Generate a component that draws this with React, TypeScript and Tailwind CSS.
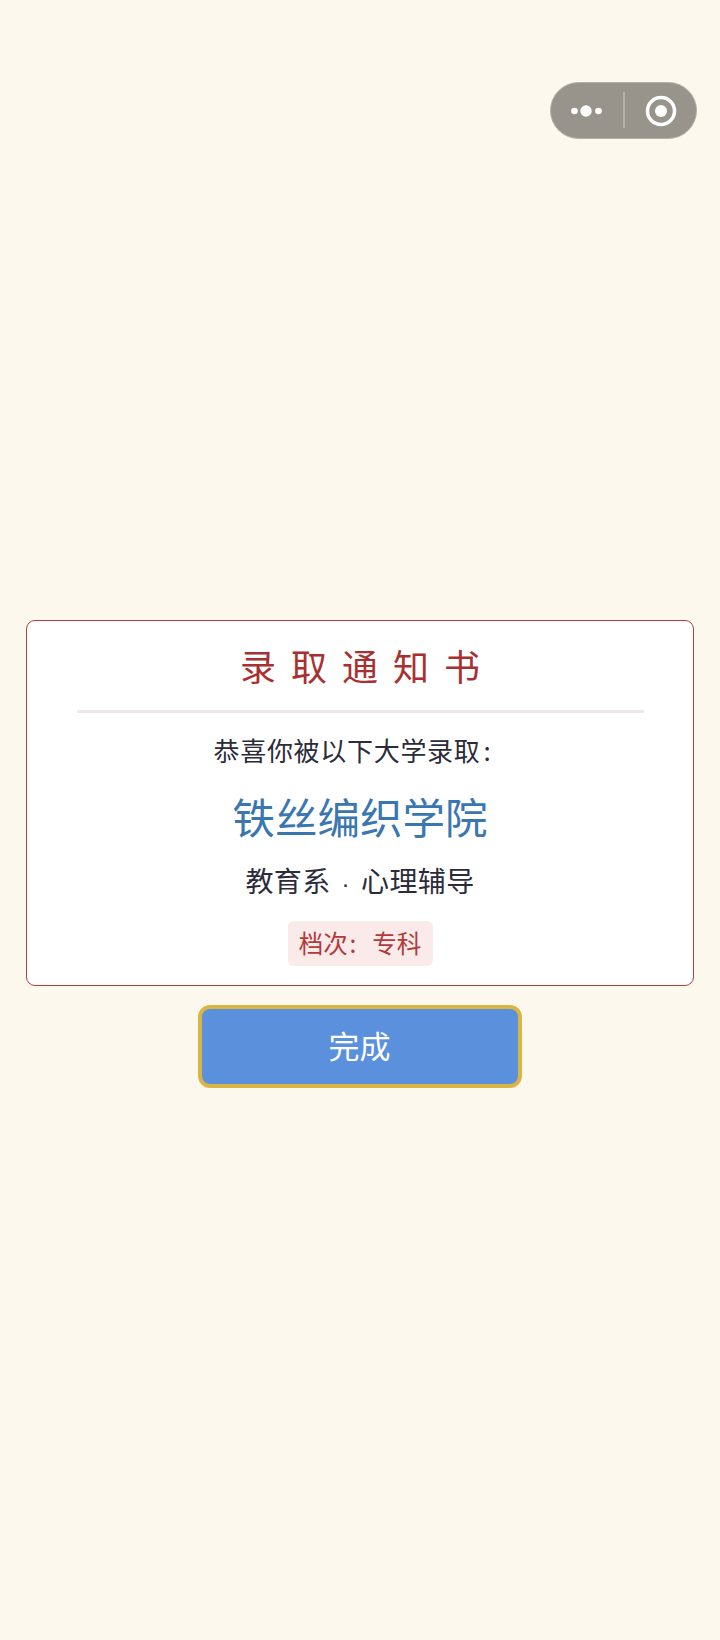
export default function App() {
  return (
    <div className="relative h-[1640px] w-[720px] overflow-hidden bg-[#fcf8ee] font-['Noto_Sans_CJK_SC','Noto_Sans',sans-serif]">
      <div className="absolute left-[550px] top-[82px] flex h-[57px] w-[147px] items-center rounded-full border border-[#b5b1a6] bg-[#98948c]">
        <svg width="147" height="57" viewBox="0 0 147 57" className="absolute -left-px -top-px">
          <circle cx="24.5" cy="29" r="3.3" fill="#fff" />
          <circle cx="36" cy="29" r="5.7" fill="#fff" />
          <circle cx="48.5" cy="29" r="3.3" fill="#fff" />
          <rect x="73" y="10" width="2" height="36" fill="#b5b1a8" />
          <circle cx="111" cy="29" r="13.5" fill="none" stroke="#fff" strokeWidth="3.5" />
          <circle cx="111" cy="29" r="6" fill="#fff" />
        </svg>
      </div>
      <main className="flex flex-col items-center pt-[620px]">
        <section className="flex h-[366px] w-[668px] flex-col items-center rounded-[9px] border-[1.5px] border-[#b04040] bg-white">
          <h1 className="mt-[19px] h-[50px] pl-[15px] text-[36px] leading-[50px] font-normal tracking-[15px] text-[#a93030]">录取通知书</h1>
          <div className="mt-[20px] h-[3px] w-[567px] bg-[#efe8e8]" />
          <p className="mt-[18px] h-[38px] pr-[15px] text-[26px] leading-[38px] tracking-[0.7px] text-[#2b2b3a]">恭喜你被以下大学录取<span className="ml-[3px]">:</span></p>
          <p className="mt-[18px] h-[58px] text-[42.5px] leading-[58px] text-[#3a76b0]">铁丝编织学院</p>
          <p className="mt-[15px] h-[40px] text-[28px] leading-[40px] tracking-[0.4px] text-[#2b2b3a]">教育系<span className="mx-[11px] font-['Liberation_Sans'] text-[24px]">·</span>心理辅导</p>
          <div className="mt-[21px] flex h-[45px] w-[145px] items-center justify-center rounded-[6px] bg-[#faeaea] text-[24.5px] text-[#b23a3a]">档次<span className="inline-block w-[24.5px] pr-[14px] text-center">:</span>专科</div>
        </section>
        <button className="mt-[19px] ml-[-1px] flex h-[83px] w-[324px] items-center justify-center rounded-[12px] border-[4px] border-[#dab544] bg-[#5a90dc] pb-[2px] text-[31px] text-white">完成</button>
      </main>
    </div>
  );
}
